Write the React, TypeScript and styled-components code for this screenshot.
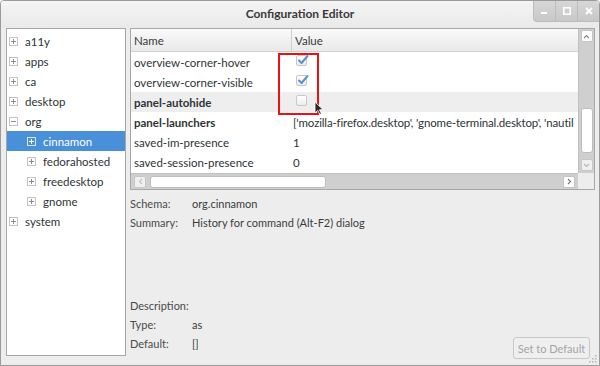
import React from "react";
import styled, { createGlobalStyle } from "styled-components";

const GlobalStyle = createGlobalStyle`
  html, body {
    margin: 0;
    padding: 0;
    background: #ffffff;
  }
  body {
    font-family: Lato, "Liberation Sans", sans-serif;
    font-size: 11px;
    color: #2e3436;
  }
`;

type TreeNode = {
  label: string;
  depth: number;
  open?: boolean;
  selected?: boolean;
};

type RowData = {
  name: string;
  value: string;
  kind: "check" | "text";
  checked?: boolean;
  bold?: boolean;
  hover?: boolean;
};

const treeNodes: TreeNode[] = [
  { label: "a11y", depth: 0 },
  { label: "apps", depth: 0 },
  { label: "ca", depth: 0 },
  { label: "desktop", depth: 0 },
  { label: "org", depth: 0, open: true },
  { label: "cinnamon", depth: 1, selected: true },
  { label: "fedorahosted", depth: 1 },
  { label: "freedesktop", depth: 1 },
  { label: "gnome", depth: 1 },
  { label: "system", depth: 0 },
];

const rows: RowData[] = [
  { name: "overview-corner-hover", value: "", kind: "check", checked: true },
  { name: "overview-corner-visible", value: "", kind: "check", checked: true },
  { name: "panel-autohide", value: "", kind: "check", bold: true, hover: true },
  {
    name: "panel-launchers",
    value: "['mozilla-firefox.desktop', 'gnome-terminal.desktop', 'nautil",
    kind: "text",
    bold: true,
  },
  { name: "saved-im-presence", value: "1", kind: "text" },
  { name: "saved-session-presence", value: "0", kind: "text" },
];

const Window = styled.div`
  position: relative;
  width: 600px;
  height: 366px;
  box-sizing: border-box;
  display: flex;
  flex-direction: column;
  background: #ededed;
  border: 1px solid #9a9a9a;
  border-radius: 4px 4px 0 0;
  overflow: hidden;
`;

const TitleBar = styled.div`
  height: 27px;
  display: grid;
  grid-template-columns: 1fr auto 1fr;
  background: linear-gradient(#f4f4f4, #e9e9e9);
`;

const Title = styled.div`
  grid-column: 2;
  align-self: center;
  font-weight: bold;
  font-size: 12px;
  color: #3a3a3a;
  margin-top: -3px;
`;

const Controls = styled.div`
  grid-column: 3;
  justify-self: end;
  display: flex;
  height: 21px;
  margin-top: -1px;
  background: linear-gradient(#d8d8d8, #c8c8c8);
  border-left: 1px solid #bdbdbd;
  border-bottom: 1px solid #bdbdbd;
  border-bottom-left-radius: 4px;
`;

const CtrlButton = styled.div<{ last?: boolean }>`
  width: 21px;
  display: flex;
  align-items: center;
  justify-content: center;
  border-right: ${(p) => (p.last ? "none" : "1px solid #bcbcbc")};
`;

const Body = styled.div`
  flex: 1;
  display: flex;
  gap: 4px;
  padding: 0 4px 6px 5px;
  min-height: 0;
`;

const TreeBox = styled.div`
  width: 120px;
  height: 328px;
  box-sizing: border-box;
  background: #ffffff;
  border: 1px solid #a8a8a8;
  padding-top: 2px;
`;

const TreeRow = styled.div<{ depth: number; selected?: boolean }>`
  height: 20px;
  display: flex;
  align-items: center;
  padding-left: ${(p) => 2 + p.depth * 18}px;
  background: ${(p) => (p.selected ? "#4a90d9" : "transparent")};
  color: ${(p) => (p.selected ? "#ffffff" : "#2e3436")};
  font-size: 11.5px;
`;

const Expander = styled.span<{ selected?: boolean }>`
  width: 9px;
  height: 9px;
  box-sizing: border-box;
  border: 1px solid ${(p) => (p.selected ? "#d5e5f6" : "#c4c4c4")};
  position: relative;
  margin-right: 7px;
  flex: none;
`;

const ExpH = styled.span<{ selected?: boolean }>`
  position: absolute;
  left: 1px;
  right: 1px;
  top: 3px;
  height: 1px;
  background: ${(p) => (p.selected ? "#ffffff" : "#8c8c8c")};
`;

const ExpV = styled.span<{ selected?: boolean }>`
  position: absolute;
  top: 1px;
  bottom: 1px;
  left: 3px;
  width: 1px;
  background: ${(p) => (p.selected ? "#ffffff" : "#8c8c8c")};
`;

const RightPane = styled.div`
  flex: 1;
  display: flex;
  flex-direction: column;
  min-width: 0;
`;

const TableFrame = styled.div`
  height: 162px;
  box-sizing: border-box;
  border: 1px solid #a8a8a8;
  background: #ffffff;
  display: grid;
  grid-template-columns: 1fr 16px;
  grid-template-rows: 1fr 16px;
`;

const TableArea = styled.div`
  overflow: hidden;
  min-width: 0;
`;

const HeaderRow = styled.div`
  height: 23px;
  display: grid;
  grid-template-columns: 160px 1fr;
  background: linear-gradient(#fafafa, #e9e9e9);
  border-bottom: 1px solid #d2d2d2;
  box-sizing: border-box;
`;

const HeaderCell = styled.div<{ divider?: boolean }>`
  display: flex;
  align-items: center;
  padding-left: 3px;
  color: #3a3a3a;
  font-size: 11.5px;
  border-left: ${(p) => (p.divider ? "1px solid #cfcfcf" : "none")};
`;

const Row = styled.div<{ hover?: boolean }>`
  height: 20px;
  display: grid;
  grid-template-columns: 160px 1fr;
  background: ${(p) => (p.hover ? "#eeeeee" : "#ffffff")};
`;

const NameCell = styled.div<{ bold?: boolean }>`
  display: flex;
  align-items: center;
  padding-left: 3px;
  font-weight: ${(p) => (p.bold ? "bold" : "normal")};
  font-size: 11.5px;
  color: #2e3436;
  white-space: nowrap;
`;

const ValueCell = styled.div`
  display: flex;
  align-items: center;
  padding-left: 2px;
  font-size: 11.5px;
  color: #2e3436;
  white-space: nowrap;
  overflow: hidden;
  min-width: 0;
`;

const ValueText = styled.span`
  letter-spacing: -0.15px;
`;

const CheckBox = styled.div`
  width: 11px;
  height: 11px;
  box-sizing: border-box;
  margin-left: 3px;
  margin-top: -4px;
  border: 1px solid #c8c8c8;
  border-radius: 2px;
  background: linear-gradient(#ffffff, #ececec);
  position: relative;
`;

const CheckMark = styled.svg`
  position: absolute;
  left: 0;
  top: -2px;
`;

const VScroll = styled.div`
  grid-row: 1;
  grid-column: 2;
  background: #cfcfcf;
  border-left: 1px solid #c0c0c0;
  display: flex;
  flex-direction: column;
  align-items: center;
  padding: 1px 0 2px;
  box-sizing: border-box;
`;

const HScroll = styled.div`
  grid-row: 2;
  grid-column: 1;
  background: #cfcfcf;
  border-top: 1px solid #c0c0c0;
  display: flex;
  align-items: center;
  padding: 0 3px 0 3px;
  box-sizing: border-box;
`;

const Corner = styled.div`
  grid-row: 2;
  grid-column: 2;
  background: #ededed;
`;

const ArrowButton = styled.div<{ dim?: boolean }>`
  width: 12px;
  height: 12px;
  box-sizing: border-box;
  background: #ffffff;
  border: 1px solid #c4c4c4;
  border-radius: 2px;
  display: flex;
  align-items: center;
  justify-content: center;
  flex: none;
  opacity: ${(p) => (p.dim ? 0.7 : 1)};
`;

const VTrack = styled.div`
  flex: 1;
  width: 100%;
  display: flex;
  flex-direction: column;
  align-items: center;
  padding: 2px 0;
  box-sizing: border-box;
`;

const VThumb = styled.div`
  margin-top: 64px;
  width: 12px;
  height: 45px;
  box-sizing: border-box;
  background: #ffffff;
  border: 1px solid #bdbdbd;
  border-radius: 3px;
`;

const HThumb = styled.div`
  margin-left: 4px;
  width: 176px;
  height: 12px;
  box-sizing: border-box;
  background: #ffffff;
  border: 1px solid #bdbdbd;
  border-radius: 3px;
`;

const HSpacer = styled.div`
  flex: 1;
`;

const Details = styled.div`
  flex: 1;
  display: flex;
  flex-direction: column;
  padding-top: 4px;
  padding-bottom: 6px;
`;

const InfoRow = styled.div`
  height: 19px;
  flex: none;
  display: grid;
  grid-template-columns: 62px 1fr auto;
  grid-template-rows: 19px;
  align-items: center;
  font-size: 11px;
  color: #3c3c3c;
`;

const Label = styled.span`
  color: #4a4a4a;
`;

const Spacer = styled.div`
  flex: 1;
`;

const DefaultButton = styled.div`
  align-self: start;
  width: 77px;
  height: 22px;
  box-sizing: border-box;
  border: 1px solid #c8c8c8;
  border-radius: 3px;
  background: #efefef;
  color: #a4a4a4;
  font-size: 11px;
  display: flex;
  align-items: center;
  justify-content: center;
  margin-right: 5px;
  margin-top: 3px;
`;

const Highlight = styled.div`
  position: absolute;
  left: 277px;
  top: 52px;
  width: 41px;
  height: 62px;
  box-sizing: border-box;
  border: 2px solid #ee1111;
`;

const Cursor = styled.svg`
  position: absolute;
  left: 313px;
  top: 100px;
`;

const Grip = styled.svg`
  position: absolute;
  right: 2px;
  bottom: 2px;
`;

const Plus: React.FC<{ open?: boolean; selected?: boolean }> = ({ open, selected }) => (
  <Expander selected={selected}>
    <ExpH selected={selected} />
    {!open && <ExpV selected={selected} />}
  </Expander>
);

const App: React.FC = () => {
  return (
    <>
      <GlobalStyle />
      <Window>
        <TitleBar>
          <Title>Configuration Editor</Title>
          <Controls>
            <CtrlButton>
              <svg width="7" height="7" viewBox="0 0 7 7">
                <rect x="0" y="5" width="6" height="2" fill="#ffffff" />
              </svg>
            </CtrlButton>
            <CtrlButton>
              <svg width="8" height="8" viewBox="0 0 8 8">
                <rect x="0.75" y="0.75" width="6.5" height="6.5" fill="none" stroke="#ffffff" strokeWidth="1.5" />
              </svg>
            </CtrlButton>
            <CtrlButton last>
              <svg width="8" height="8" viewBox="0 0 8 8">
                <path d="M1 1L7 7M7 1L1 7" stroke="#ffffff" strokeWidth="1.8" />
              </svg>
            </CtrlButton>
          </Controls>
        </TitleBar>
        <Body>
          <TreeBox>
            {treeNodes.map((n) => (
              <TreeRow key={n.label} depth={n.depth} selected={n.selected}>
                <Plus open={n.open} selected={n.selected} />
                {n.label}
              </TreeRow>
            ))}
          </TreeBox>
          <RightPane>
            <TableFrame>
              <TableArea>
                <HeaderRow>
                  <HeaderCell>Name</HeaderCell>
                  <HeaderCell divider>Value</HeaderCell>
                </HeaderRow>
                {rows.map((r) => (
                  <Row key={r.name} hover={r.hover}>
                    <NameCell bold={r.bold}>{r.name}</NameCell>
                    <ValueCell>
                      {r.kind === "check" ? (
                        <CheckBox>
                          {r.checked && (
                            <CheckMark width="12" height="11" viewBox="0 0 12 11">
                              <path d="M2 6.5L4.6 9L10.5 2" fill="none" stroke="#5a92d0" strokeWidth="2" strokeLinecap="round" strokeLinejoin="round" />
                            </CheckMark>
                          )}
                        </CheckBox>
                      ) : (
                        <ValueText>{r.value}</ValueText>
                      )}
                    </ValueCell>
                  </Row>
                ))}
              </TableArea>
              <VScroll>
                <ArrowButton>
                  <svg width="7" height="5" viewBox="0 0 7 5">
                    <path d="M1 4L3.5 1.5L6 4" fill="none" stroke="#888" strokeWidth="1.1" />
                  </svg>
                </ArrowButton>
                <VTrack>
                  <VThumb />
                </VTrack>
                <ArrowButton dim>
                  <svg width="7" height="5" viewBox="0 0 7 5">
                    <path d="M1 1L3.5 3.5L6 1" fill="none" stroke="#aaa" strokeWidth="1.1" />
                  </svg>
                </ArrowButton>
              </VScroll>
              <HScroll>
                <ArrowButton dim>
                  <svg width="5" height="7" viewBox="0 0 5 7">
                    <path d="M4 1L1.5 3.5L4 6" fill="none" stroke="#bbb" strokeWidth="1.1" />
                  </svg>
                </ArrowButton>
                <HThumb />
                <HSpacer />
                <ArrowButton>
                  <svg width="5" height="7" viewBox="0 0 5 7">
                    <path d="M1 1L3.5 3.5L1 6" fill="none" stroke="#777" strokeWidth="1.1" />
                  </svg>
                </ArrowButton>
              </HScroll>
              <Corner />
            </TableFrame>
            <Details>
              <InfoRow>
                <Label>Schema:</Label>
                <span>org.cinnamon</span>
              </InfoRow>
              <InfoRow>
                <Label>Summary:</Label>
                <span>History for command (Alt-F2) dialog</span>
              </InfoRow>
              <Spacer />
              <InfoRow>
                <Label>Description:</Label>
                <span />
              </InfoRow>
              <InfoRow>
                <Label>Type:</Label>
                <span>as</span>
              </InfoRow>
              <InfoRow>
                <Label>Default:</Label>
                <span>[]</span>
                <DefaultButton>Set to Default</DefaultButton>
              </InfoRow>
            </Details>
          </RightPane>
        </Body>
        <Highlight />
        <Cursor width="10" height="14" viewBox="0 0 10 14">
          <path d="M1 1L1 12L3.8 9.4L5.8 13.5L7.4 12.7L5.5 8.8L9 8.6Z" fill="#2a2a2a" stroke="#ffffff" strokeWidth="0.8" />
        </Cursor>
        <Grip width="8" height="8" viewBox="0 0 8 8">
          <rect x="6" y="0" width="1.5" height="1.5" fill="#b5b5b5" />
          <rect x="3" y="3" width="1.5" height="1.5" fill="#b5b5b5" />
          <rect x="6" y="3" width="1.5" height="1.5" fill="#b5b5b5" />
          <rect x="0" y="6" width="1.5" height="1.5" fill="#b5b5b5" />
          <rect x="3" y="6" width="1.5" height="1.5" fill="#b5b5b5" />
          <rect x="6" y="6" width="1.5" height="1.5" fill="#b5b5b5" />
        </Grip>
      </Window>
    </>
  );
};

export default App;
